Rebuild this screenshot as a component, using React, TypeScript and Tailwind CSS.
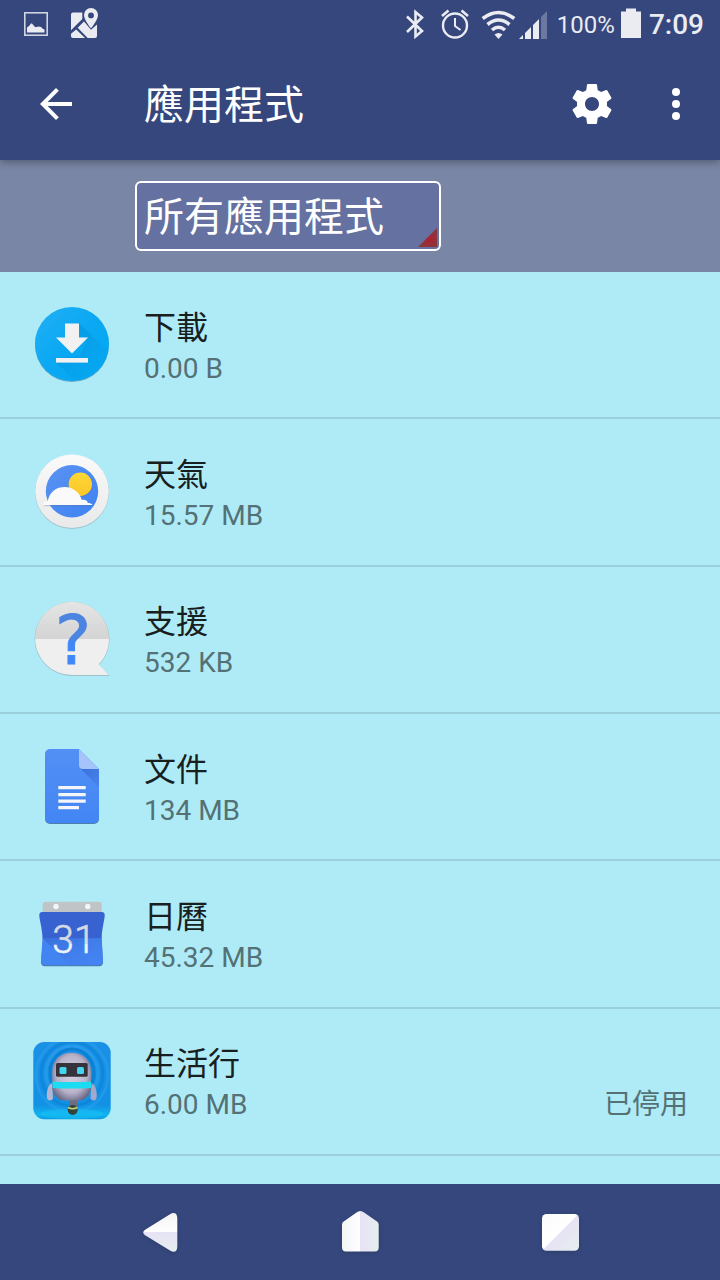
import type { ReactNode } from "react";

function StatusBar() {
  return (
    <div className="flex h-12 items-center justify-between pl-6 pr-4 text-[#ebecf2]">
      <div className="flex items-center gap-5">
        <svg className="size-6" viewBox="0 0 24 24" fill="none" aria-hidden="true">
          <rect x=".8" y=".8" width="22.400" height="22.400" stroke="currentColor" strokeWidth="1.600" opacity=".85" />
          <path d="M3 20.500v-5l2-1.500 2-2.500h1l2.500 3 1.500.8 2.500-.8 2.500.5 2 2 1.500.5v3z" fill="currentColor" />
        </svg>
        <svg className="size-8" viewBox="0 0 32 32" aria-hidden="true">
          <path d="M5 4.500h9.300v6.500L3 22.300V6.500a2 2 0 0 1 2-2z" fill="currentColor" />
          <path d="M3 25.800l5.200-4.300 8.800 8.500H5a2 2 0 0 1-2-2z" fill="currentColor" />
          <path d="M9.700 19.800L16 13.500l7 8.300 6-5.300V28a2 2 0 0 1-2 2h-7.300z" fill="currentColor" />
          <path fillRule="evenodd" d="M23 0a7 7 0 0 0-7 7c0 5 7 13.300 7 13.300S30 12 30 7a7 7 0 0 0-7-7zm0 4.500a2.900 2.900 0 1 1 0 5.800 2.900 2.900 0 0 1 0-5.800z" fill="currentColor" />
        </svg>
      </div>
      <div className="flex items-center">
        <svg className="h-8 w-5" viewBox="0 0 20 32" fill="none" stroke="currentColor" strokeWidth="2.600" aria-hidden="true">
          <path d="M2 8.500l15 14.500-6.500 5.500V4L17 9.500 2 24" />
        </svg>
        <svg className="ml-4 h-8 w-7" viewBox="0 0 28 32" fill="none" stroke="currentColor" aria-hidden="true">
          <circle cx="14" cy="17.500" r="12" strokeWidth="2.400" />
          <path d="M14 10v8l5.500 4" strokeWidth="2" />
          <path d="M1 8l6.500-5.500M27 8l-6.500-5.500" strokeWidth="2.600" />
        </svg>
        <svg className="ml-3 h-8 w-9" viewBox="0 0 36 32" fill="none" stroke="currentColor" strokeWidth="3.600" aria-hidden="true">
          <path d="M1.700 10.500Q17.500 -1.500 33.300 10.500" />
          <path d="M6.500 16.500Q17.500 7.500 28.500 16.500" />
          <path d="M11 22Q17.500 16.500 24 22" />
          <path d="M13.500 26.500q4-3 8 0l-4 4.500z" fill="currentColor" stroke="none" />
        </svg>
        <svg className="ml-0.5 h-8 w-7" viewBox="0 0 28 32" fill="currentColor" aria-hidden="true">
          <path d="M0 31l4-4v4zM6 25l6-6v12H6zM14 17l6-6v20h-6z" />
          <path d="M22 9l6-6v28h-6z" opacity=".3" />
        </svg>
        <span className="ml-2.5 pt-0.5 text-2xl">100%</span>
        <svg className="ml-1.5 h-8 w-5" viewBox="0 0 20 32" fill="currentColor" aria-hidden="true">
          <path d="M5 .500h10v3h5V30H0V3.500h5z" />
        </svg>
        <span className="ml-2 pt-0.5 text-[28px] font-medium">7:09</span>
      </div>
    </div>
  );
}

function Toolbar() {
  return (
    <div className="flex h-28 items-center pl-8 pr-5 text-white">
      <button type="button" aria-label="返回" className="size-12">
        <svg viewBox="0 0 24 24" fill="currentColor">
          <path d="M20 11H7.830l5.590-5.590L12 4l-8 8 8 8 1.410-1.410L7.830 13H20v-2z" />
        </svg>
      </button>
      <h1 className="ml-16 flex-1 pt-1 text-[40px]">應用程式</h1>
      <button type="button" aria-label="設定" className="size-12">
        <svg viewBox="0 0 24 24" fill="currentColor">
          <path d="M19.430 12.980c.04-.32.07-.64.07-.98s-.03-.66-.07-.98l2.110-1.650c.19-.15.24-.42.12-.64l-2-3.460c-.12-.22-.39-.3-.61-.22l-2.490 1c-.52-.4-1.080-.73-1.690-.98l-.38-2.650C14.460 2.180 14.250 2 14 2h-4c-.25 0-.46.18-.49.42l-.38 2.650c-.61.25-1.170.59-1.690.98l-2.490-1c-.23-.09-.49 0-.61.22l-2 3.460c-.13.22-.07.49.12.64l2.110 1.650c-.04.32-.07.65-.07.98s.03.66.07.98l-2.110 1.650c-.19.15-.24.42-.12.64l2 3.460c.12.22.39.3.61.22l2.490-1c.52.4 1.080.73 1.690.98l.38 2.650c.03.24.24.42.49.42h4c.25 0 .46-.18.49-.42l.38-2.650c.61-.25 1.170-.59 1.690-.98l2.490 1c.23.09.49 0 .61-.22l2-3.460c.12-.22.07-.49-.12-.64l-2.110-1.650zM12 15.500c-1.930 0-3.500-1.570-3.500-3.500s1.570-3.500 3.500-3.500 3.500 1.570 3.500 3.500-1.570 3.500-3.500 3.500z" />
        </svg>
      </button>
      <button type="button" aria-label="更多選項" className="ml-9 size-12">
        <svg viewBox="0 0 24 24" fill="currentColor">
          <circle cx="12" cy="6" r="2" />
          <circle cx="12" cy="12" r="2" />
          <circle cx="12" cy="18" r="2" />
        </svg>
      </button>
    </div>
  );
}

function FilterBar() {
  return (
    <div className="flex h-28 items-center bg-[#7a86a6] pl-[135px]">
      <div className="relative">
        <select
          aria-label="篩選應用程式"
          className="block h-[70px] w-[306px] appearance-none rounded-md border-2 border-white bg-[#6571a0] pt-1 pl-[7px] text-[40px] text-white outline-none"
        >
          <option>所有應用程式</option>
        </select>
        <svg className="pointer-events-none absolute right-1 bottom-1 size-5" viewBox="0 0 20 20" aria-hidden="true">
          <defs>
            <radialGradient id="corner" cx=".6" cy=".6" r=".45">
              <stop offset="0" stopColor="#b0202f" />
              <stop offset="1" stopColor="#8a363c" />
            </radialGradient>
          </defs>
          <path d="M20 1v19H1z" fill="url(#corner)" />
        </svg>
      </div>
    </div>
  );
}

function AppIcon({ children }: { children: ReactNode }) {
  return (
    <svg className="size-20 shrink-0" viewBox="0 0 80 80" aria-hidden="true">
      {children}
    </svg>
  );
}

function DownloadIcon() {
  return (
    <AppIcon>
      <defs>
        <linearGradient id="dl-bg" x1="0" y1="0" x2="1" y2="1">
          <stop offset="0" stopColor="#22b0f5" />
          <stop offset=".5" stopColor="#0aa8f3" />
          <stop offset="1" stopColor="#03a9f4" />
        </linearGradient>
        <linearGradient id="dl-shade" x1="0" y1="0" x2="1" y2="1">
          <stop offset="0" stopColor="#0277bd" stopOpacity=".4" />
          <stop offset=".7" stopColor="#0288d1" stopOpacity=".04" />
        </linearGradient>
        <clipPath id="dl-clip">
          <circle cx="40" cy="39" r="37" />
        </clipPath>
      </defs>
      <circle cx="40" cy="40" r="37" fill="#3f8fb0" opacity=".7" />
      <circle cx="40" cy="39" r="37" fill="url(#dl-bg)" />
      <path d="M47 18l40 38-30 34-33-33v-4l24-2 8-19h-9z" fill="url(#dl-shade)" clipPath="url(#dl-clip)" />
      <path d="M33 18.500h14v14h9L40 48.500l-16-16h9z" fill="#f1f1f1" />
      <path d="M24 53h32v4.600H24z" fill="#f1f1f1" />
    </AppIcon>
  );
}

function WeatherIcon() {
  return (
    <AppIcon>
      <defs>
        <linearGradient id="we-ring" x1="0" y1="0" x2="0" y2="1">
          <stop offset="0" stopColor="#fafafa" />
          <stop offset="1" stopColor="#e9e9ea" />
        </linearGradient>
        <linearGradient id="we-sky" x1="0" y1="0" x2="1" y2="1">
          <stop offset="0" stopColor="#5a93f2" />
          <stop offset="1" stopColor="#3f82f3" />
        </linearGradient>
        <linearGradient id="we-sun" x1="0" y1="0" x2="0" y2="1">
          <stop offset="0" stopColor="#ffd733" />
          <stop offset="1" stopColor="#fbc62b" />
        </linearGradient>
      </defs>
      <circle cx="40" cy="40" r="37" fill="#9fc3cb" />
      <circle cx="40" cy="39.300" r="36.800" fill="url(#we-ring)" />
      <circle cx="40" cy="39.300" r="26.200" fill="url(#we-sky)" />
      <circle cx="48.300" cy="33" r="12" fill="#3a70cf" opacity=".5" />
      <circle cx="48.300" cy="32.300" r="11.700" fill="url(#we-sun)" />
      <path d="M11 53.300h49v1H13z" fill="#5b6f94" opacity=".4" />
      <path d="M10.700 53c0-2 2-3.800 5-4C18 39 25 35 32.500 35c9 0 15.500 6 17.300 13 3.200-.6 5.500.6 6 3 2 0 4 .4 4.700 2z" fill="#fafafa" />
    </AppIcon>
  );
}

function SupportIcon() {
  return (
    <AppIcon>
      <defs>
        <clipPath id="su-bubble">
          <path d="M40 2.700A37 37 0 0 1 77 39.700C77 50 73 59 66.700 65.300L77 76H40A37 36.600 0 0 1 40 2.700z" />
        </clipPath>
        <linearGradient id="su-mark" x1="0" y1="0" x2="0" y2="1">
          <stop offset=".5" stopColor="#4c84e2" />
          <stop offset=".5" stopColor="#4187f7" />
        </linearGradient>
        <linearGradient id="su-top" x1="0" y1="0" x2="0" y2="1">
          <stop offset="0" stopColor="#e6e6e6" />
          <stop offset="1" stopColor="#d4d4d4" />
        </linearGradient>
      </defs>
      <path d="M40 2.700A37 37 0 0 1 77 39.700C77 50 73 59 66.700 65.300L77 76H40A37 36.600 0 0 1 40 2.700z" fill="#9fc3cb" stroke="#9fc3cb" transform="translate(0 .5)" />
      <g clipPath="url(#su-bubble)">
        <path d="M0 0h80v40H0z" fill="url(#su-top)" />
        <path d="M0 40h80v40H0z" fill="#efefef" />
      </g>
      <text x="41" y="65" textAnchor="middle" fontSize="68" fill="url(#su-mark)" stroke="url(#su-mark)" strokeWidth="1" className="font-['DejaVu_Sans',sans-serif]">
        ?
      </text>
    </AppIcon>
  );
}

function DocsIcon() {
  return (
    <AppIcon>
      <defs>
        <linearGradient id="do-page" x1="0" y1="0" x2="0" y2="1">
          <stop offset="0" stopColor="#5390f5" />
          <stop offset="1" stopColor="#4285f4" />
        </linearGradient>
        <linearGradient id="do-shade" x1="0" y1="0" x2="1" y2="1">
          <stop offset="0" stopColor="#3567d0" stopOpacity=".8" />
          <stop offset="1" stopColor="#3a72dd" stopOpacity=".3" />
        </linearGradient>
      </defs>
      <path d="M18 3h29l20 20v49a5 5 0 0 1-5 5H18a5 5 0 0 1-5-5V8a5 5 0 0 1 5-5z" fill="#4b7fae" />
      <path d="M18 2h29l20 20v49a5 5 0 0 1-5 5H18a5 5 0 0 1-5-5V7a5 5 0 0 1 5-5z" fill="url(#do-page)" />
      <path d="M48.500 21.500L67 40V22z" fill="url(#do-shade)" />
      <path d="M47 2l20 20H51a4 4 0 0 1-4-4z" fill="#a6c4fa" />
      <path d="M26.300 39h27.400v3.300H26.300zM26.300 45.900h27.400v3.300H26.300zM26.300 52.400h27.400v3.300H26.300zM26.300 59h20.700v3.300H26.300z" fill="#f4f5f8" />
    </AppIcon>
  );
}

function CalendarIcon() {
  return (
    <AppIcon>
      <defs>
        <linearGradient id="ca-shade" x1="0" y1="0" x2="1" y2="1">
          <stop offset="0" stopColor="#2f5cc0" stopOpacity=".5" />
          <stop offset=".8" stopColor="#3a74e0" stopOpacity=".1" />
        </linearGradient>
        <linearGradient id="ca-num" x1="0" y1="0" x2="0" y2="1">
          <stop offset=".6" stopColor="#d5d9e6" />
          <stop offset=".6" stopColor="#f0f1f6" />
        </linearGradient>
      </defs>
      <path d="M10.700 20v-9.300a3 3 0 0 1 3-3h53a3 3 0 0 1 3 3V20z" fill="#c1c4c6" />
      <circle cx="24" cy="12.500" r="2.700" fill="#f5f5f5" />
      <circle cx="55.700" cy="12.500" r="2.700" fill="#f5f5f5" />
      <path d="M11 45.300h58.500l1.500 23a4 4 0 0 1-4 4H13a4 4 0 0 1-4-4z" fill="#4a7ba6" />
      <path d="M10.500 44h59.200l1.300 23.300a4 4 0 0 1-4 4H13a4 4 0 0 1-4-4z" fill="#4384f3" />
      <path d="M10.500 44.300L37.500 71.300H67a4 4 0 0 0 4-4L69.700 44.300z" fill="url(#ca-shade)" />
      <path d="M7.300 21a3 3 0 0 1 3-3h59.400a3 3 0 0 1 3 3c0 5-3 14-3 23.300H10.500C10.500 35 7.300 26 7.300 21z" fill="#3762d0" />
      <text x="42" y="58.500" textAnchor="middle" fontSize="39" fill="url(#ca-num)" stroke="url(#ca-num)" strokeWidth=".6" className="font-['Roboto',sans-serif] font-light">
        31
      </text>
    </AppIcon>
  );
}

function RobotIcon() {
  return (
    <AppIcon>
      <defs>
        <linearGradient id="ro-bg" x1="0" y1="0" x2="0" y2="1">
          <stop offset="0" stopColor="#1a90e6" />
          <stop offset=".8" stopColor="#1291e4" />
          <stop offset=".92" stopColor="#12b4f0" />
          <stop offset="1" stopColor="#1090dc" />
        </linearGradient>
        <radialGradient id="ro-head" cx=".5" cy=".45" r=".6">
          <stop offset="0" stopColor="#d5d2e2" />
          <stop offset=".65" stopColor="#b9b3ca" />
          <stop offset="1" stopColor="#686784" />
        </radialGradient>
        <clipPath id="ro-clip">
          <rect x="1.300" y="1" width="77.400" height="77.300" rx="11" />
        </clipPath>
        <filter id="ro-soft">
          <feGaussianBlur stdDeviation=".7" />
        </filter>
      </defs>
      <g clipPath="url(#ro-clip)">
        <path d="M0 0h80v80H0z" fill="url(#ro-bg)" />
        <g fill="none" strokeWidth="3" filter="url(#ro-soft)">
          <ellipse cx="40" cy="32" rx="22" ry="24" stroke="#0a72c4" opacity=".5" />
          <ellipse cx="40" cy="32" rx="26" ry="27" stroke="#3dabf3" opacity=".35" />
          <ellipse cx="40" cy="33" rx="31" ry="32" stroke="#0a76cb" opacity=".35" />
          <ellipse cx="40" cy="34" rx="36" ry="37" stroke="#35a8f2" opacity=".3" />
        </g>
        <ellipse cx="40" cy="73" rx="32" ry="5" fill="#12c2f5" opacity=".5" filter="url(#ro-soft)" />
      </g>
      <g filter="url(#ro-soft)">
        <path d="M20 42c-4 2-6 9-5 15 .5 3 4 3 6 1z" fill="#b5b6d4" />
        <path d="M59.500 42c4 2 6 9 5 15-.5 3-4 3-6 1z" fill="#a4a9cb" />
        <path d="M37 58h8v9h-8z" fill="#706c80" />
        <circle cx="40.700" cy="69" r="5" fill="#33453d" />
        <path d="M36 66.500q4.500 2.500 9.500 0" stroke="#c9ce78" strokeWidth="1.500" fill="none" />
        <path d="M39.700 11.700C51 11.700 59 19 59 30v16c0 8-6 13.500-12 13.500H32.500c-6 0-12.200-5.500-12.200-13.500V30c0-11 8-18.300 19.400-18.300z" fill="url(#ro-head)" />
        <rect x="24" y="22" width="31.700" height="13.700" rx="1.500" fill="#34323a" />
        <rect x="27.500" y="26" width="7" height="7" rx="1.500" fill="#45d3ee" />
        <rect x="45" y="26" width="7" height="7" rx="1.500" fill="#45d3ee" />
        <path d="M20.500 40.500q19.300 1 38.500 0V47q-19.200 1-38.500 0z" fill="#1cdcf3" />
      </g>
    </AppIcon>
  );
}

type AppEntry = { name: string; size: string; icon: ReactNode; state?: string };

const apps: AppEntry[] = [
  { name: "下載", size: "0.00 B", icon: <DownloadIcon /> },
  { name: "天氣", size: "15.57 MB", icon: <WeatherIcon /> },
  { name: "支援", size: "532 KB", icon: <SupportIcon /> },
  { name: "文件", size: "134 MB", icon: <DocsIcon /> },
  { name: "日曆", size: "45.32 MB", icon: <CalendarIcon /> },
  { name: "生活行", size: "6.00 MB", icon: <RobotIcon />, state: "已停用" },
];

function AppRow({ app }: { app: AppEntry }) {
  return (
    <li className="flex items-center gap-8 border-b-2 border-[#9bcfda] px-8">
      {app.icon}
      <div className="flex-1 pt-1.5">
        <h2 className="text-[32px] leading-[42px] text-[#17201f]">{app.name}</h2>
        <div className="flex justify-between text-[28px] leading-[40px] text-[#547175]">
          <span>{app.size}</span>
          {app.state && <span>{app.state}</span>}
        </div>
      </div>
    </li>
  );
}

function NavigationBar() {
  return (
    <nav className="grid h-24 grid-cols-3 items-center bg-[#35477d] px-[60px]">
      <button type="button" aria-label="上一頁" className="mx-auto size-12">
        <svg viewBox="0 0 48 48" className="drop-shadow-sm">
          <defs>
            <linearGradient id="nav-back" x1="0" y1="0" x2="0" y2="1">
              <stop offset="0" stopColor="#f4f4f4" />
              <stop offset=".49" stopColor="#ffffff" />
              <stop offset=".5" stopColor="#e6e3f5" />
              <stop offset="1" stopColor="#e6eeee" />
            </linearGradient>
          </defs>
          <path d="M9.500 21.500L34 6.200C38 4 41.300 5 41.300 10.500V38.500c0 5.500-3.300 6.300-7.300 4L9.500 27.500c-3-1.700-3-4.300 0-6z" fill="url(#nav-back)" />
        </svg>
      </button>
      <button type="button" aria-label="主畫面" className="mx-auto size-12">
        <svg viewBox="0 0 48 48" className="drop-shadow-sm">
          <defs>
            <linearGradient id="nav-home" x1="0" y1="0" x2="1" y2="0">
              <stop offset="0" stopColor="#f4f4f4" />
              <stop offset=".49" stopColor="#ffffff" />
              <stop offset=".5" stopColor="#e6e3f5" />
              <stop offset="1" stopColor="#e6eeee" />
            </linearGradient>
          </defs>
          <path d="M20.500 4.500q3.800-3 7.600 0L41 13.500q1.700 1.200 1.700 3V39.500q0 4-4 4H10q-4 0-4-4v-23q0-1.800 1.700-3z" fill="url(#nav-home)" />
        </svg>
      </button>
      <button type="button" aria-label="最近使用" className="mx-auto size-12">
        <svg viewBox="0 0 48 48" className="drop-shadow-sm">
          <defs>
            <linearGradient id="nav-recent" x1="0" y1="0" x2="1" y2="1">
              <stop offset="0" stopColor="#fbfbfb" />
              <stop offset=".49" stopColor="#ffffff" />
              <stop offset=".5" stopColor="#e6e3f5" />
              <stop offset="1" stopColor="#e6eeee" />
            </linearGradient>
          </defs>
          <rect x="6" y="6" width="37" height="36.700" rx="4.500" fill="url(#nav-recent)" />
        </svg>
      </button>
    </nav>
  );
}

export default function App() {
  return (
    <div className="flex min-h-screen flex-col bg-[#afebf6] font-['Roboto','Noto_Sans_CJK_TC',sans-serif]">
      <header className="relative z-10 bg-[#35477d] shadow-[0_2px_8px_rgba(0,0,0,0.35)]">
        <StatusBar />
        <Toolbar />
      </header>
      <FilterBar />
      <main className="flex-1">
        <ul className="grid min-h-[884px] auto-rows-fr">
          {apps.map((app) => (
            <AppRow key={app.name} app={app} />
          ))}
        </ul>
      </main>
      <NavigationBar />
    </div>
  );
}
